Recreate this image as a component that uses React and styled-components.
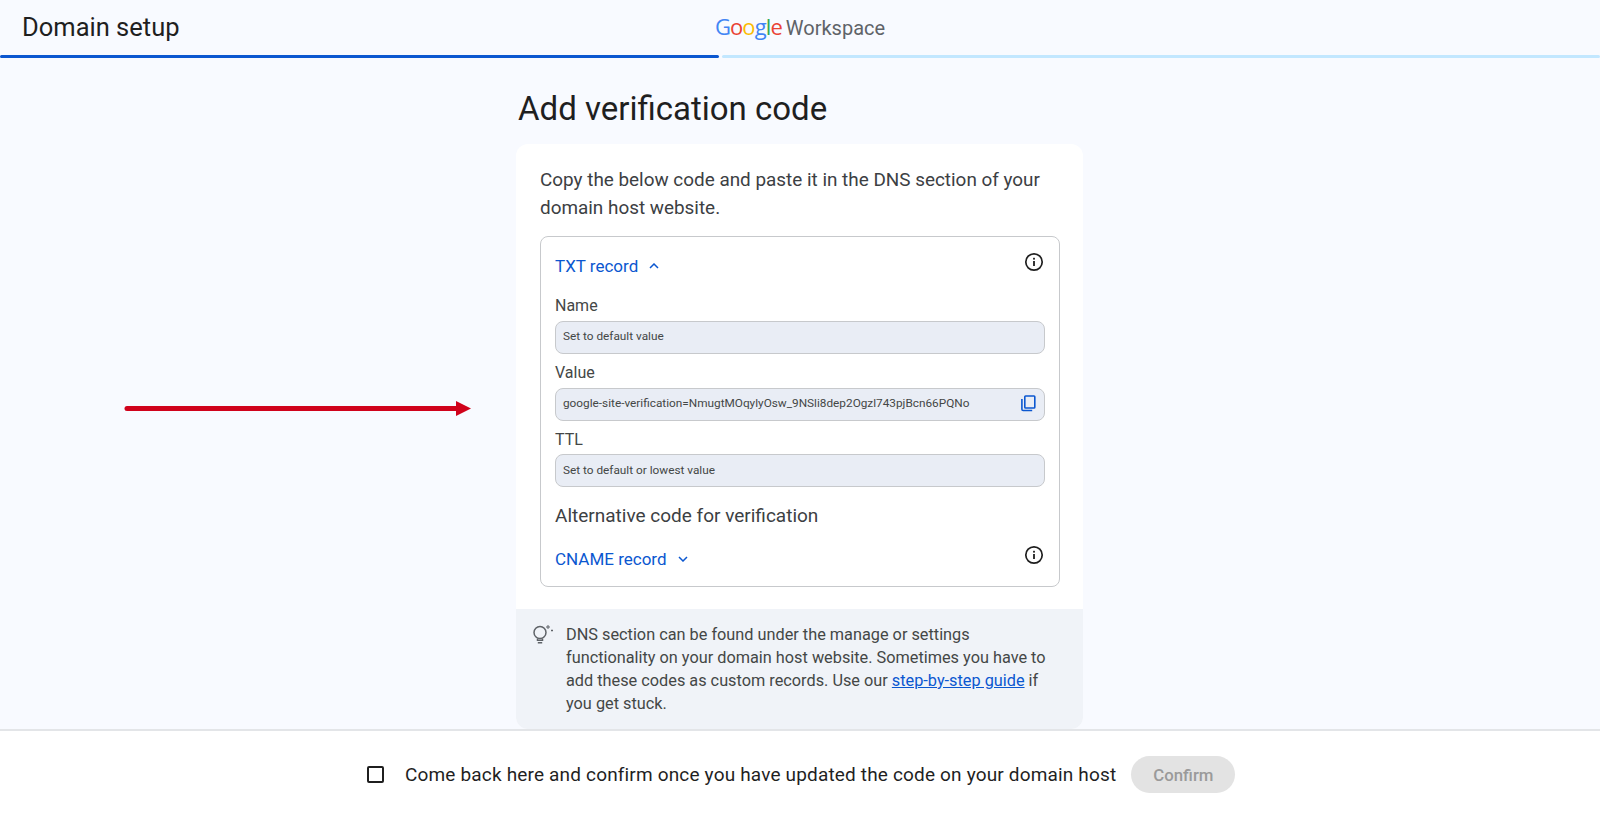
import React from 'react'
import styled, { createGlobalStyle } from 'styled-components'

const GlobalStyle = createGlobalStyle`
  html, body {
    margin: 0;
    padding: 0;
    height: 100%;
    background: #f8faff;
    font-family: Roboto, "Liberation Sans", sans-serif;
  }
  * {
    box-sizing: border-box;
  }
`

const Page = styled.div`
  position: relative;
  height: 818px;
  display: flex;
  flex-direction: column;
  overflow: hidden;
`

const Header = styled.header`
  height: 55px;
  display: grid;
  grid-template-columns: 1fr auto 1fr;
  align-items: center;
  padding: 0 22px;
`

const PageName = styled.div`
  font-size: 25.5px;
  color: #1f1f1f;
  padding-bottom: 1px;
`

const Logo = styled.div`
  display: flex;
  align-items: baseline;
  gap: 4px;
  font-size: 20px;
  color: #5f6368;
  padding-bottom: 4px;
`

const GoogleWord = styled.span`
  font-family: "Open Sans", sans-serif;
  font-size: 22px;
  font-weight: 500;
  letter-spacing: -0.9px;
`

const Letter = styled.span`
  color: ${(p) => p.$color};
`

const Progress = styled.div`
  display: flex;
  gap: 3px;
  height: 3px;
`

const ProgressPart = styled.div`
  flex: ${(p) => p.$size};
  background: ${(p) => p.$color};
  border-radius: 2px;
`

const Main = styled.main`
  flex: 1;
  width: 567px;
  margin-left: 516px;
  min-height: 0;
`

const Title = styled.h1`
  margin: 28px 0 12px 2px;
  font-size: 33px;
  line-height: 46px;
  font-weight: 400;
  color: #1f1f1f;
`

const Card = styled.section`
  background: #fff;
  border-radius: 12px;
  overflow: hidden;
`

const CardBody = styled.div`
  padding: 22px 23px 22px 24px;
`

const Intro = styled.p`
  margin: 0 0 14px;
  font-size: 18.9px;
  line-height: 28px;
  color: #3c4043;
`

const RecordBox = styled.div`
  border: 1px solid #c7c9cc;
  border-radius: 8px;
  height: 351px;
  padding: 14px 14px 0;
`

const RecordHead = styled.div`
  display: flex;
  justify-content: space-between;
  align-items: flex-start;
  height: ${(p) => p.$height}px;
`

const RecordToggle = styled.div`
  display: flex;
  align-items: center;
  gap: 11px;
  padding-top: 5px;
  font-size: 17px;
  line-height: 20px;
  color: #0b57d0;
`

const InfoButton = styled.div`
  display: flex;
  margin: 1px 1px 0 0;
  color: #1f1f1f;
`

const FieldLabel = styled.div`
  font-size: 16px;
  line-height: 24px;
  height: 33.8px;
  padding-top: 7px;
  color: #444746;
`

const Field = styled.div`
  display: flex;
  justify-content: space-between;
  align-items: center;
  height: 33px;
  padding: 0 8px 2px 7px;
  border: 1px solid #c7c9cc;
  border-radius: 8px;
  background: #e9edf5;
  font-size: 11.8px;
  color: #444746;
`

const AltTitle = styled.div`
  font-size: 19px;
  line-height: 26px;
  margin: 16px 0 15px;
  color: #3c4043;
`

const Tip = styled.div`
  display: flex;
  gap: 10px;
  padding: 14px 30px 14px 16px;
  background: #f0f3f8;
  height: 120px;
`

const TipIcon = styled.div`
  flex-shrink: 0;
  width: 24px;
  height: 24px;
`

const TipText = styled.p`
  margin: 0;
  font-size: 16.3px;
  line-height: 23px;
  color: #444746;
`

const TipLink = styled.a`
  color: #0b57d0;
  text-decoration: underline;
`

const Footer = styled.footer`
  height: 89px;
  background: #fff;
  border-top: 2px solid #e3e5e8;
  display: flex;
  align-items: center;
  padding: 0 0 0 367px;
`

const CheckBox = styled.div`
  width: 17px;
  height: 17px;
  border: 2px solid #1f1f1f;
  border-radius: 2px;
  margin-right: 21px;
`

const FooterText = styled.span`
  font-size: 19px;
  letter-spacing: 0.17px;
  color: #1f1f1f;
  margin-right: 15px;
`

const ConfirmButton = styled.div`
  width: 104px;
  height: 37px;
  border-radius: 19px;
  background: #e3e3e3;
  color: #9a9a9a;
  font-size: 16.8px;
  font-weight: 500;
  display: flex;
  align-items: center;
  justify-content: center;
`

const Arrow = styled.svg`
  position: absolute;
  left: 124px;
  top: 400px;
`

const InfoIcon = () => (
  <svg width="20" height="20" viewBox="0 0 20 20" fill="none">
    <circle cx="10" cy="10" r="8.2" stroke="currentColor" strokeWidth="1.7" />
    <rect x="9.1" y="9" width="1.8" height="5" fill="currentColor" />
    <rect x="9.1" y="5.8" width="1.8" height="1.8" fill="currentColor" />
  </svg>
)

const Chevron = ({ up }) => (
  <svg width="10" height="6" viewBox="0 0 10 6" fill="none">
    <path d={up ? 'M1 5l4-4 4 4' : 'M1 1l4 4 4-4'} stroke="#0b57d0" strokeWidth="1.5" />
  </svg>
)

const CopyIcon = () => (
  <svg width="15" height="17" viewBox="0 0 15 17" fill="none" stroke="#0b57d0" strokeWidth="1.6">
    <rect x="3.8" y="1" width="10" height="12" rx="0.8" />
    <path d="M0.9 4v10.2c0 .8.5 1.3 1.3 1.3h9" />
  </svg>
)

const BulbIcon = () => (
  <svg width="24" height="24" viewBox="0 0 24 24" fill="none" stroke="#5f6368" strokeWidth="1.5">
    <circle cx="8" cy="9.5" r="6" />
    <path d="M5.5 15.5v1.7h5v-1.7M5.8 19.8h4.4" />
    <path d="M16 2v4M14 4h4M20 6.5v2M19 7.5h2" strokeWidth="1" />
  </svg>
)

const googleLetters = [
  ['G', '#4285f4'],
  ['o', '#ea4335'],
  ['o', '#fbbc05'],
  ['g', '#4285f4'],
  ['l', '#34a853'],
  ['e', '#ea4335'],
]

export default function App() {
  return (
    <Page>
      <GlobalStyle />
      <Header>
        <PageName>Domain setup</PageName>
        <Logo>
          <GoogleWord>
            {googleLetters.map(([letter, color], i) => (
              <Letter key={i} $color={color}>
                {letter}
              </Letter>
            ))}
          </GoogleWord>
          <span>Workspace</span>
        </Logo>
        <span />
      </Header>
      <Progress>
        <ProgressPart $size={719} $color="#0b57d0" />
        <ProgressPart $size={878} $color="#c2e7ff" />
      </Progress>
      <Main>
        <Title>Add verification code</Title>
        <Card>
          <CardBody>
            <Intro>
              Copy the below code and paste it in the DNS section of your domain host website.
            </Intro>
            <RecordBox>
              <RecordHead $height={36}>
                <RecordToggle>
                  TXT record <Chevron up />
                </RecordToggle>
                <InfoButton>
                  <InfoIcon />
                </InfoButton>
              </RecordHead>
              <FieldLabel>Name</FieldLabel>
              <Field>Set to default value</Field>
              <FieldLabel>Value</FieldLabel>
              <Field>
                google-site-verification=NmugtMOqylyOsw_9NSli8dep2Ogzl743pjBcn66PQNo
                <CopyIcon />
              </Field>
              <FieldLabel>TTL</FieldLabel>
              <Field>Set to default or lowest value</Field>
              <AltTitle>Alternative code for verification</AltTitle>
              <RecordHead $height={40}>
                <RecordToggle>
                  CNAME record <Chevron />
                </RecordToggle>
                <InfoButton>
                  <InfoIcon />
                </InfoButton>
              </RecordHead>
            </RecordBox>
          </CardBody>
          <Tip>
            <TipIcon>
              <BulbIcon />
            </TipIcon>
            <TipText>
              DNS section can be found under the manage or settings functionality on your domain
              host website. Sometimes you have to add these codes as custom records. Use our{' '}
              <TipLink href="#">step-by-step guide</TipLink> if you get stuck.
            </TipText>
          </Tip>
        </Card>
      </Main>
      <Footer>
        <CheckBox />
        <FooterText>Come back here and confirm once you have updated the code on your domain host</FooterText>
        <ConfirmButton>Confirm</ConfirmButton>
      </Footer>
      <Arrow width="350" height="17" viewBox="0 0 350 17">
        <path d="M3 8.5h332" stroke="#d0021b" strokeWidth="5" strokeLinecap="round" />
        <path d="M332 1l15 7.5-15 7.5z" fill="#d0021b" />
      </Arrow>
    </Page>
  )
}
